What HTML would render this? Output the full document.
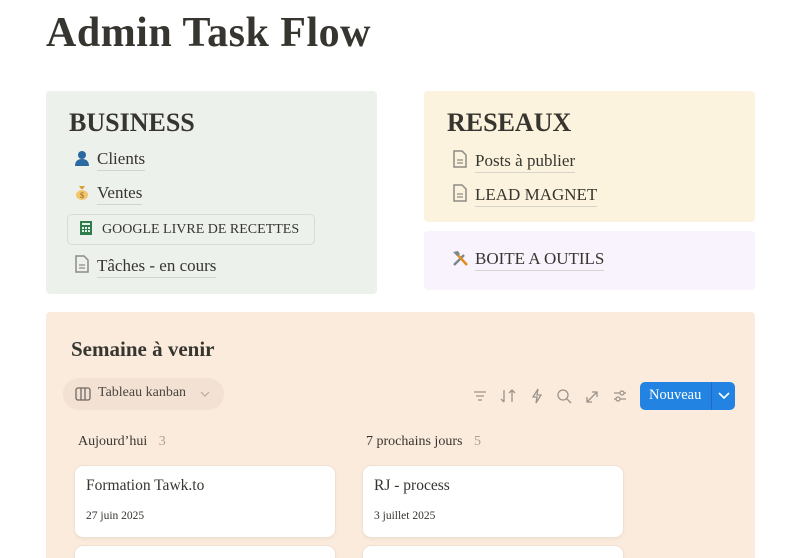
<!DOCTYPE html>
<html><head><meta charset="utf-8"><style>
*{margin:0;padding:0;box-sizing:border-box}
html,body{width:786px;height:558px;overflow:hidden}
body{background:#fff;font-family:"Liberation Serif",serif;color:#37352f;position:relative}
.a{position:absolute}
h1{position:absolute;left:46px;top:9px;font-size:42px;font-weight:bold;letter-spacing:0.5px}
.box{position:absolute;border-radius:4px}
.h{position:absolute;font-size:26px;font-weight:bold}
.lnk{position:absolute;font-size:17px;white-space:nowrap}
.lnk span{border-bottom:1px solid #d6d3cc;padding-bottom:2px}
.ic{display:inline-block;width:20px;margin-right:5px;vertical-align:-3px}
.card{position:absolute;background:#fff;border-radius:8px;box-shadow:0 0 0 1px #efe0d0,0 2px 4px rgba(0,0,0,0.05)}
.ct{position:absolute;left:11px;top:11px;font-size:15.5px}
.cd{position:absolute;left:11px;top:44px;font-size:11.5px}
</style></head><body>
<h1>Admin Task Flow</h1>

<div class="box" style="left:46px;top:91px;width:331px;height:203px;background:#edf1ec"></div>
<div class="h" style="left:69px;top:108px">BUSINESS</div>
<div class="lnk" style="left:72px;top:149px"><svg class="ic" width="18" height="18" viewBox="0 0 18 18"><circle cx="9" cy="6" r="4" fill="#2a6aa0"/><path d="M2 17c0-5 3-7 7-7s7 2 7 7z" fill="#2a6aa0"/></svg><span>Clients</span></div>
<div class="lnk" style="left:72px;top:183px"><svg class="ic" width="18" height="18" viewBox="0 0 18 18"><path d="M6 3h6l-2 3h-2z" fill="#d9a13a"/><ellipse cx="9" cy="12" rx="6" ry="5" fill="#f3c66c"/><text x="9" y="15" font-size="8" text-anchor="middle" fill="#8a5b1a">$</text></svg><span>Ventes</span></div>
<div class="a" style="left:67px;top:214px;width:248px;height:31px;border:1px solid #d7dcd6;border-radius:5px"></div>
<div class="lnk" style="left:79px;top:220px;font-size:14px"><svg class="ic" width="14" height="16" viewBox="0 0 14 16" style="width:14px;margin-right:9px"><rect x="1" y="1" width="12" height="14" fill="#2f7d4f"/><g fill="#e6f1ea"><rect x="3" y="3" width="8" height="2"/><rect x="3" y="7" width="2" height="2"/><rect x="6" y="7" width="2" height="2"/><rect x="9" y="7" width="2" height="2"/><rect x="3" y="10" width="2" height="2"/><rect x="6" y="10" width="2" height="2"/><rect x="9" y="10" width="2" height="2"/></g></svg>GOOGLE LIVRE DE RECETTES</div>
<div class="lnk" style="left:72px;top:254px"><svg class="ic" width="18" height="20" viewBox="0 0 18 20"><path d="M3 2h8l4 4v12H3z" fill="none" stroke="#8f8b85" stroke-width="1.5"/><path d="M6 11h6M6 14h6" stroke="#8f8b85" stroke-width="1.2"/></svg><span>Tâches - en cours</span></div>

<div class="box" style="left:424px;top:91px;width:331px;height:131px;background:#fbf3dd"></div>
<div class="h" style="left:447px;top:108px">RESEAUX</div>
<div class="lnk" style="left:450px;top:149px"><svg class="ic" width="18" height="20" viewBox="0 0 18 20"><path d="M3 2h8l4 4v12H3z" fill="none" stroke="#8f8b85" stroke-width="1.5"/><path d="M6 11h6M6 14h6" stroke="#8f8b85" stroke-width="1.2"/></svg><span>Posts à publier</span></div>
<div class="lnk" style="left:450px;top:183px"><svg class="ic" width="18" height="20" viewBox="0 0 18 20"><path d="M3 2h8l4 4v12H3z" fill="none" stroke="#8f8b85" stroke-width="1.5"/><path d="M6 11h6M6 14h6" stroke="#8f8b85" stroke-width="1.2"/></svg><span>LEAD MAGNET</span></div>

<div class="box" style="left:424px;top:231px;width:331px;height:59px;background:#f8f3fc"></div>
<div class="lnk" style="left:450px;top:249px"><svg class="ic" width="18" height="18" viewBox="0 0 18 18"><path d="M3 16L13 6" stroke="#7a8790" stroke-width="2.5"/><path d="M5 4l11 12" stroke="#e58a1f" stroke-width="2.5"/><path d="M2 3l5-1 2 3-3 2z" fill="#7a8790"/></svg><span>BOITE A OUTILS</span></div>

<div class="box" style="left:46px;top:312px;width:709px;height:246px;background:#fbebdd;border-radius:4px 4px 0 0"></div>
<div class="a" style="left:71px;top:337px;font-size:21px;font-weight:bold">Semaine à venir</div>
<div class="a" style="left:63px;top:378px;width:161px;height:32px;border-radius:16px;background:#f3e2d3"></div>
<svg class="a" style="left:75px;top:387px" width="16" height="14" viewBox="0 0 16 14"><rect x="1" y="1" width="14" height="12" rx="2" fill="none" stroke="#6f6a64" stroke-width="1.3"/><path d="M6 1v12M10 1v12" stroke="#6f6a64" stroke-width="1.3"/></svg>
<div class="a" style="left:98px;top:385px;font-size:14px;color:#4a4640">Tableau kanban</div>
<svg class="a" style="left:200px;top:391px" width="10" height="7" viewBox="0 0 10 7"><path d="M1 1l4 4 4-4" fill="none" stroke="#b8aca0" stroke-width="1.2"/></svg>

<svg class="a" style="left:472px;top:388px" width="160" height="16" viewBox="0 0 160 16" fill="none" stroke="#9a948d" stroke-width="1.3">
<path d="M2 4h12M4 8h8M6 12h4"/>
<path d="M32 2v12M29 11l3 3M40 14V2M37 5l3-3 3 3"/>
<path d="M66 1l-5 8h4l-1 6 5-8h-4z"/>
<circle cx="91" cy="7" r="5"/><path d="M95 11l4 4"/>
<path d="M115 14l10-10M120 4h5v5M115 9v5h5"/>
<path d="M142 5h12M142 11h12"/><circle cx="150" cy="5" r="2" fill="#fbebdd"/><circle cx="146" cy="11" r="2" fill="#fbebdd"/>
</svg>
<div class="a" style="left:640px;top:382px;width:95px;height:28px;border-radius:5px;background:#2383e2"></div>
<div class="a" style="left:711px;top:382px;width:1px;height:28px;background:#1b6cbf"></div>
<div class="a" style="left:649px;top:387px;font-size:14.5px;color:#fff">Nouveau</div>
<svg class="a" style="left:718px;top:392px" width="12" height="8" viewBox="0 0 12 8"><path d="M1 1l5 5 5-5" fill="none" stroke="#fff" stroke-width="1.6"/></svg>

<div class="a" style="left:78px;top:434px;font-size:14px">Aujourd’hui <span style="color:#a9a29a;margin-left:8px">3</span></div>
<div class="a" style="left:366px;top:434px;font-size:14px">7 prochains jours <span style="color:#a9a29a;margin-left:8px">5</span></div>

<div class="card" style="left:75px;top:466px;width:260px;height:71px"><div class="ct">Formation Tawk.to</div><div class="cd">27 juin 2025</div></div>
<div class="card" style="left:75px;top:546px;width:260px;height:12px;border-radius:8px 8px 0 0"></div>
<div class="card" style="left:363px;top:466px;width:260px;height:71px"><div class="ct">RJ - process</div><div class="cd">3 juillet 2025</div></div>
<div class="card" style="left:363px;top:546px;width:260px;height:12px;border-radius:8px 8px 0 0"></div>
</body></html>
